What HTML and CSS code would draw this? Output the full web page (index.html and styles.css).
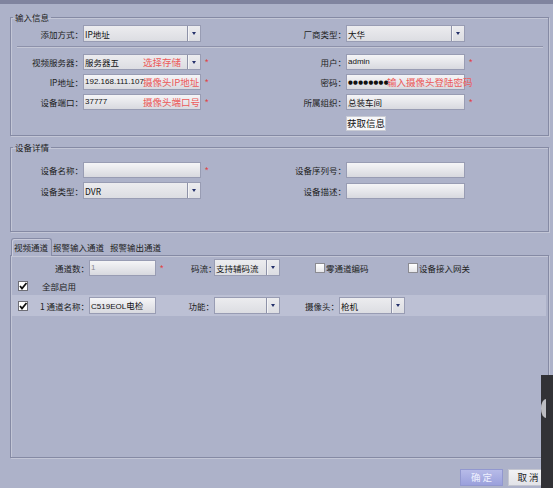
FILE: index.html
```html
<!DOCTYPE html>
<html lang="zh-CN">
<head>
<meta charset="utf-8">
<title>添加设备</title>
<link rel="stylesheet" href="styles.css">
</head>
<body>
<div class="topbar"></div>
<div class="main">
  <fieldset class="group g1">
    <legend>输入信息</legend>
    <div class="form">
      <label class="lbl">添加方式：</label>
      <div class="field select tall"><span class="val cjk">IP地址</span><span class="arrow"><i></i></span></div>
      <span></span>
      <label class="lbl">厂商类型：</label>
      <div class="field select tall"><span class="val cjk">大华</span><span class="arrow"><i></i></span></div>
      <span></span>
    </div>
    <div class="sep"></div>
    <div class="form">
      <label class="lbl">视频服务器：</label>
      <div class="field select"><span class="val cjk">服务器五</span><span class="hint">选择存储</span><span class="arrow"><i></i></span></div>
      <span class="star">*</span>
      <label class="lbl">用户：</label>
      <div class="field"><span class="val">admin</span></div>
      <span class="star">*</span>

      <label class="lbl">IP地址：</label>
      <div class="field"><span class="val">192.168.111.107</span><span class="hint">摄像头IP地址</span></div>
      <span class="star">*</span>
      <label class="lbl">密码：</label>
      <div class="field"><span class="val dots">●●●●●●●●</span><span class="hint pw">输入摄像头登陆密码</span></div>
      <span></span>

      <label class="lbl">设备端口：</label>
      <div class="field"><span class="val">37777</span><span class="hint">摄像头端口号</span></div>
      <span class="star">*</span>
      <label class="lbl">所属组织：</label>
      <div class="field"><span class="val cjk">总装车间</span></div>
      <span class="star">*</span>

      <span></span><span></span><span></span><span></span>
      <div class="btnwrap"><button class="btn-fetch">获取信息</button></div>
      <span></span>
    </div>
  </fieldset>

  <fieldset class="group g2">
    <legend>设备详情</legend>
    <div class="form">
      <label class="lbl">设备名称：</label>
      <div class="field"></div>
      <span class="star">*</span>
      <label class="lbl">设备序列号：</label>
      <div class="field"></div>
      <span></span>

      <label class="lbl">设备类型：</label>
      <div class="field select tall"><span class="val cjk">DVR</span><span class="arrow"><i></i></span></div>
      <span></span>
      <label class="lbl">设备描述：</label>
      <div class="field"></div>
      <span></span>
    </div>
  </fieldset>

  <div class="tabs">
    <span class="tab active">视频通道</span>
    <span class="tab t2">报警输入通道</span>
    <span class="tab t3">报警输出通道</span>
  </div>
  <div class="panel">
    <div class="row-a">
      <label class="lbl w78">通道数：</label>
      <div class="field w67"><span class="val grey">1</span></div>
      <span class="star w35">*</span>
      <label class="lbl w23">码流：</label>
      <div class="field select tall w66"><span class="val cjk">支持辅码流</span><span class="arrow"><i></i></span></div>
      <span class="check c1"><span class="box"></span><span class="ctext">零通道编码</span></span>
      <span class="check"><span class="box"></span><span class="ctext">设备接入网关</span></span>
    </div>
    <div class="row-b">
      <span class="box on"><svg viewBox="0 0 10 10" width="10" height="10"><polyline points="2,5 4,7.5 8.5,2" fill="none" stroke="#111" stroke-width="1.8"/></svg></span>
      <span class="btext">全部启用</span>
    </div>
    <div class="row-c">
      <span class="box on"><svg viewBox="0 0 10 10" width="10" height="10"><polyline points="2,5 4,7.5 8.5,2" fill="none" stroke="#111" stroke-width="1.8"/></svg></span>
      <label class="lbl w61">1 通道名称：</label>
      <div class="field tall w67"><span class="val">C519EOL<span class="cjk">电检</span></span></div>
      <label class="lbl w58">功能：</label>
      <div class="field select tall w66"><span class="val"></span><span class="arrow"><i></i></span></div>
      <label class="lbl w59">摄像头：</label>
      <div class="field select tall w66"><span class="val cjk">枪机</span><span class="arrow"><i></i></span></div>
    </div>
  </div>

  <div class="actions">
    <button class="btn ok">确定</button>
    <button class="btn cancel">取消</button>
  </div>
</div>
<div class="sidepanel"><span class="knob"></span></div>
</body>
</html>
```
FILE: styles.css
```css
html, body {
  margin: 0;
  padding: 0;
}
body {
  width: 553px;
  height: 488px;
  overflow: hidden;
  position: relative;
  background: #adb2c9;
  font-family: "Noto Sans CJK SC", "Noto Sans", sans-serif;
  font-size: 8.5px;
  color: #222;
}
.topbar {
  height: 4px;
  background: #80849f;
}
.main {
  padding: 5px 4px 0 10px;
}
.group {
  margin: 0;
  padding: 0 0 4px 0;
  border: 1px solid #858aa4;
  box-shadow: 1px 1px 0 #c3c6d6, inset 1px 1px 0 #c3c6d6;
  min-width: 0;
}
.group legend {
  padding: 0 2px;
  margin-left: 2px;
  line-height: 16px;
  font-size: 8.5px;
  color: #222;
}
.g2 {
  margin-top: 3px;
  padding-bottom: 32px;
}
.g2 .form {
  margin-top: 7px;
}
.form {
  display: grid;
  grid-template-columns: 72px 118px 21px 124px 119px 1fr;
  row-gap: 4px;
  align-items: center;
}
.lbl {
  text-align: right;
  white-space: nowrap;
  line-height: 16px;
  color: #222;
}
.field {
  position: relative;
  box-sizing: border-box;
  height: 16px;
  border: 1px solid #989cb3;
  background: linear-gradient(#f5f5f7, #d8d9df);
  line-height: 14px;
  padding-left: 1px;
  font-family: "Liberation Sans", "Noto Sans CJK SC", sans-serif;
  font-size: 8px;
  color: #111;
  white-space: nowrap;
  display: flex;
  align-items: center;
}
.field.tall {
  height: 17px;
}
.select {
  background: linear-gradient(#ececef, #dcdde2);
}
.val {
  flex: 1;
  line-height: 14px;
}
.cjk {
  font-family: "Noto Sans CJK SC", sans-serif;
  font-size: 8.5px;
}
.grey {
  color: #8a8a90;
}
.dots {
  font-family: "DejaVu Sans", sans-serif;
  font-size: 5.5px;
  letter-spacing: 0.3px;
  color: #111;
}
.arrow {
  width: 12px;
  align-self: stretch;
  border-left: 1px solid #8e92a8;
  box-shadow: inset 1px 0 0 #f4f4f6;
  display: flex;
  align-items: center;
  justify-content: center;
}
.arrow i {
  width: 0;
  height: 0;
  border-left: 2.5px solid transparent;
  border-right: 2.5px solid transparent;
  border-top: 3px solid #24306a;
}
.hint {
  position: absolute;
  left: 59px;
  top: 0;
  font-family: "Noto Sans CJK SC", sans-serif;
  font-size: 9.5px;
  line-height: 14px;
  color: #ec5a5a;
  white-space: nowrap;
}
.hint.pw {
  left: 40px;
}
.star {
  color: #e23c3c;
  font-family: "Liberation Sans", sans-serif;
  font-size: 9px;
  padding-left: 4px;
  line-height: 16px;
}
.sep {
  height: 0;
  margin: 4px 5px 6px 6px;
  border-top: 1px solid #8d91aa;
  border-bottom: 1px solid #c4c7d6;
}
.btnwrap {
  margin-top: 2px;
}
.btn-fetch {
  display: block;
  width: 40px;
  height: 15px;
  padding: 0;
  border: 1px solid #c9cbd4;
  background: #f7f7f9;
  font-family: "Noto Sans CJK SC", sans-serif;
  font-size: 9.5px;
  line-height: 13px;
  color: #111;
}
.tabs {
  margin-top: 6px;
  display: flex;
  align-items: flex-end;
  height: 17px;
  padding-left: 1px;
  position: relative;
  z-index: 1;
}
.tab {
  line-height: 16px;
  white-space: nowrap;
  color: #222;
}
.tab.active {
  box-sizing: border-box;
  width: 41px;
  height: 18px;
  margin-bottom: -1px;
  padding-left: 2px;
  border: 1px solid #878ca6;
  border-bottom: none;
  border-radius: 3px 3px 0 0;
  background: #adb2c9;
  box-shadow: inset 1px 1px 0 #c9cbdb;
}
.tab.t2 {
  margin-left: 1px;
}
.tab.t3 {
  margin-left: 6px;
}
.panel {
  box-sizing: border-box;
  height: 203px;
  border: 1px solid #858aa4;
  box-shadow: 1px 1px 0 #c3c6d6, inset 1px 1px 0 #c3c6d6;
  padding-top: 3px;
}
.row-a {
  display: flex;
  align-items: center;
  height: 17px;
}
.w78 { width: 78px; flex: none; }
.w67 { width: 67px; flex: none; }
.w35 { width: 35px; flex: none; box-sizing: border-box; }
.w23 { width: 23px; flex: none; }
.w66 { width: 66px; flex: none; }
.w61 { width: 61px; flex: none; }
.w58 { width: 58px; flex: none; }
.w59 { width: 59px; flex: none; }
.check {
  display: flex;
  align-items: center;
  white-space: nowrap;
}
.check.c1 {
  margin-left: 35px;
  width: 93px;
}
.box {
  box-sizing: border-box;
  width: 10px;
  height: 10px;
  flex: none;
  border: 1px solid #8b8b92;
  background: linear-gradient(#ffffff, #e6e6ea);
  display: inline-flex;
  align-items: center;
  justify-content: center;
}
.box svg {
  display: block;
  margin: -1px;
}
.box.on {
  background: #ffffff;
  border-color: #6e6e76;
}
.ctext {
  margin-left: 1px;
}
.row-b {
  display: flex;
  align-items: center;
  height: 12px;
  margin-top: 4px;
  padding-left: 7px;
}
.btext {
  margin-left: 14px;
}
.row-c {
  display: flex;
  align-items: center;
  height: 21px;
  margin: 3px 2px 0 1px;
  padding-left: 6px;
  background: #bcc0d4;
}
.actions {
  display: flex;
  justify-content: flex-end;
  gap: 5px;
  margin-top: 11px;
  padding-right: 1px;
}
.btn {
  box-sizing: border-box;
  height: 17px;
  padding: 0;
  font-family: "Noto Sans CJK SC", sans-serif;
  font-size: 9.5px;
  letter-spacing: 2px;
  text-indent: 2px;
  line-height: 15px;
}
.btn.ok {
  width: 43px;
  border: 1px solid #9298cf;
  background: linear-gradient(#b7bbe8, #9aa0dc);
  color: #eef0ff;
}
.btn.cancel {
  width: 40px;
  border: 1px solid #c4c6d0;
  background: linear-gradient(#f2f2f5, #e2e3e8);
  color: #222;
}
.sidepanel {
  position: absolute;
  right: 0;
  top: 375px;
  width: 12px;
  height: 113px;
  background: #323236;
}
.knob {
  position: absolute;
  left: 0;
  top: 24px;
  width: 5px;
  height: 19px;
  border-radius: 5px 0 0 5px / 9px 0 0 9px;
  background: #bdbdc2;
}
```
